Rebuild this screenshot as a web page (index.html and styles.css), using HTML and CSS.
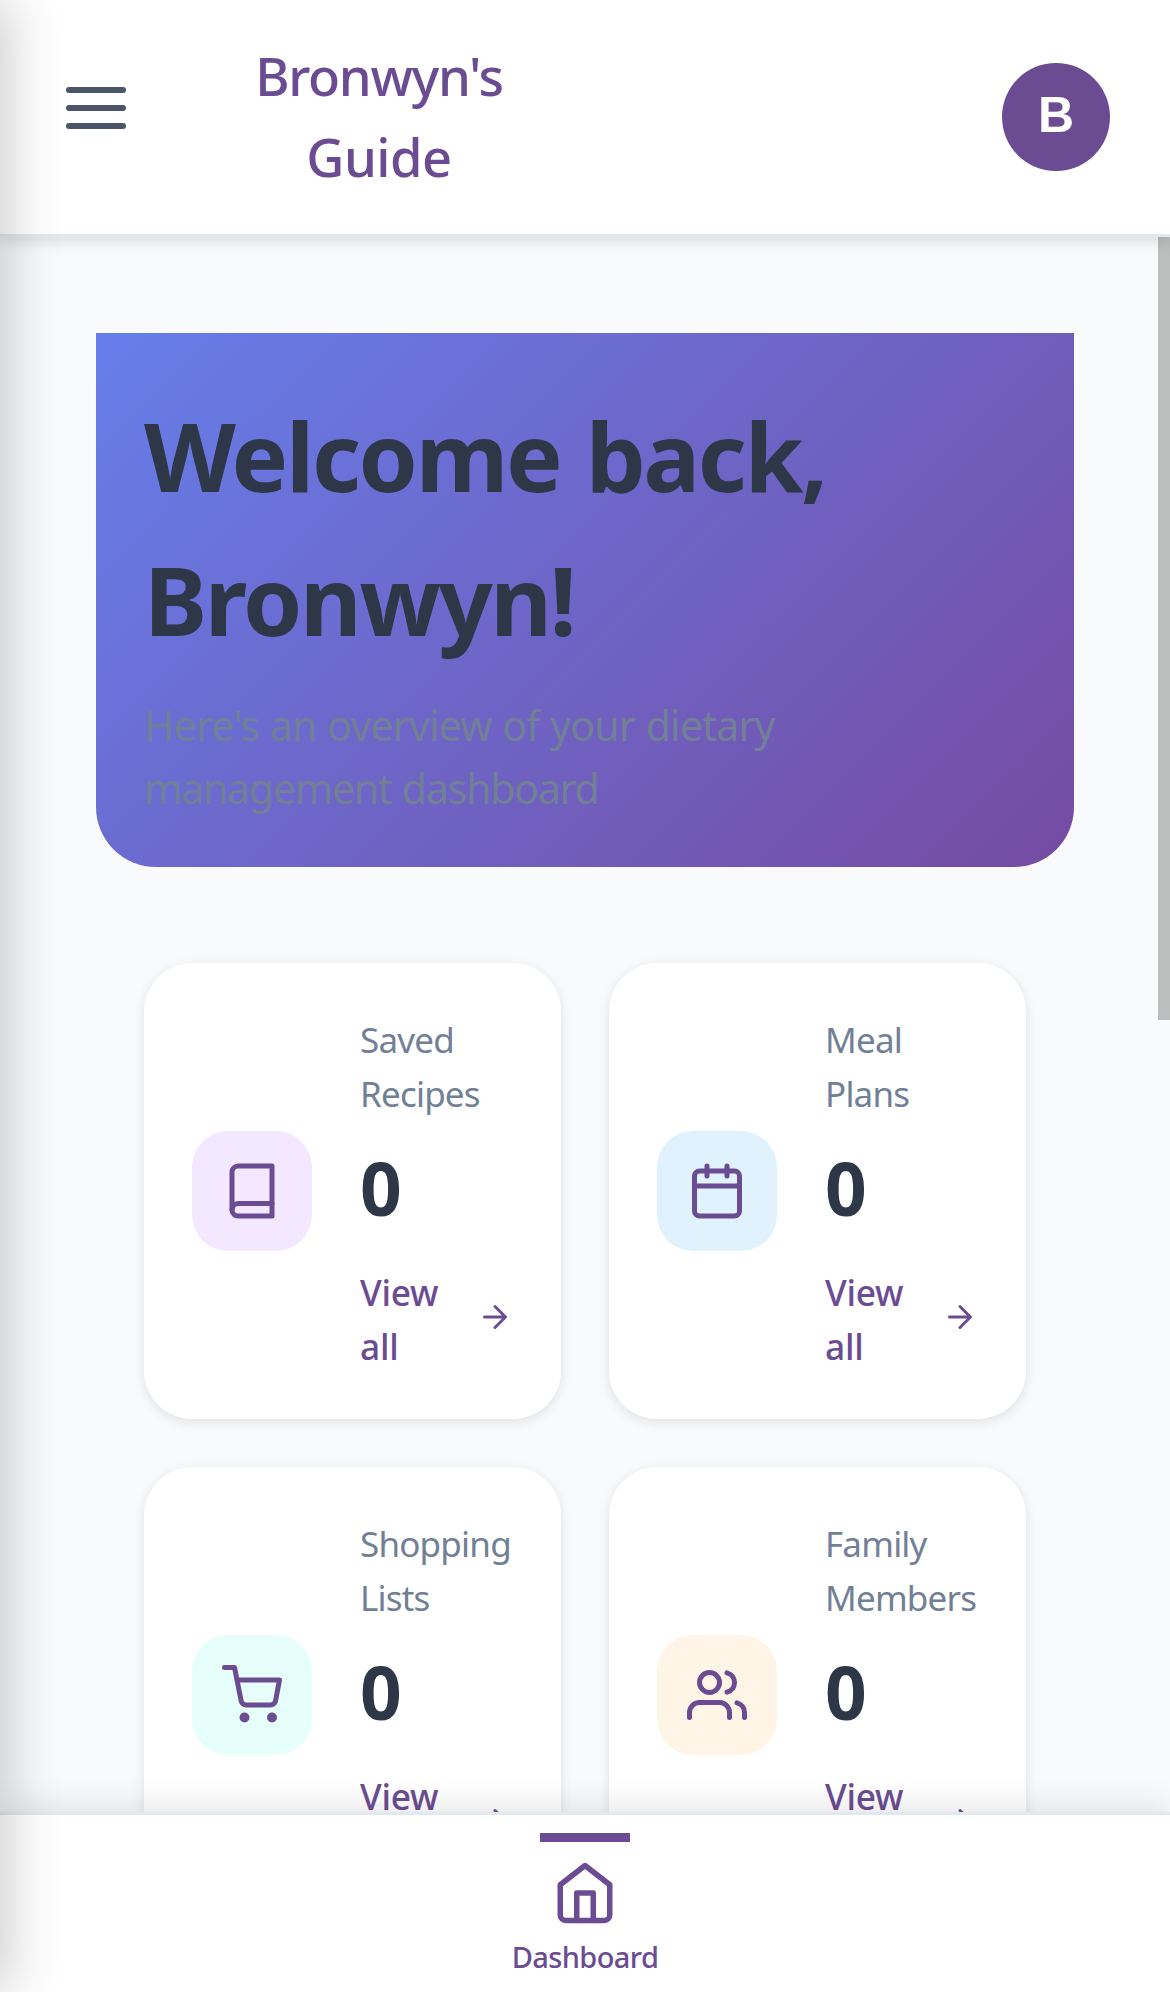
FILE: index.html
```html
<!DOCTYPE html>
<html lang="en">
<head>
<meta charset="utf-8">
<title>Bronwyn's Guide</title>
<link rel="stylesheet" href="styles.css">
</head>
<body>
<div class="app">
  <header class="header">
    <button class="menu" aria-label="Menu"><span class="menu-bar"></span><span class="menu-bar"></span><span class="menu-bar"></span></button>
    <div class="title"><span class="title-name">Bronwyn's</span><br>Guide</div>
    <div class="avatar">B</div>
  </header>

  <main class="main">
    <section class="banner">
      <h1 class="banner-title">Welcome back,<br>Bronwyn!</h1>
      <p class="banner-text">Here's an overview of your dietary<br><span class="banner-text-end">management dashboard</span></p>
    </section>

    <section class="stats">
      <article class="card">
        <div class="card-icon purple">
          <svg class="icon" viewBox="0 0 24 24"><path d="M4 19.5A2.5 2.5 0 0 1 6.5 17H20"/><path d="M6.5 2H20v20H6.5A2.5 2.5 0 0 1 4 19.5v-15A2.5 2.5 0 0 1 6.5 2z"/></svg>
        </div>
        <div class="card-info">
          <div class="label">Saved<br>Recipes</div>
          <div class="number">0</div>
          <a class="link"><span>View<br>all</span><svg class="arrow" viewBox="0 0 24 24"><path d="M5 12h14M12 5l7 7-7 7"/></svg></a>
        </div>
      </article>
      <article class="card">
        <div class="card-icon blue">
          <svg class="icon" viewBox="0 0 24 24"><rect x="3" y="4" width="18" height="18" rx="2"/><path d="M16 2v4M8 2v4M3 10h18"/></svg>
        </div>
        <div class="card-info">
          <div class="label">Meal<br>Plans</div>
          <div class="number">0</div>
          <a class="link"><span>View<br>all</span><svg class="arrow" viewBox="0 0 24 24"><path d="M5 12h14M12 5l7 7-7 7"/></svg></a>
        </div>
      </article>
      <article class="card">
        <div class="card-icon teal">
          <svg class="icon" viewBox="0 0 24 24"><circle cx="9" cy="21" r="1"/><circle cx="20" cy="21" r="1"/><path d="M1 1h4l2.68 13.39a2 2 0 0 0 2 1.61h9.72a2 2 0 0 0 2-1.61L23 6H6"/></svg>
        </div>
        <div class="card-info">
          <div class="label">Shopping<br>Lists</div>
          <div class="number">0</div>
          <a class="link"><span>View<br>all</span><svg class="arrow" viewBox="0 0 24 24"><path d="M5 12h14M12 5l7 7-7 7"/></svg></a>
        </div>
      </article>
      <article class="card">
        <div class="card-icon orange">
          <svg class="icon" viewBox="0 0 24 24"><path d="M17 21v-2a4 4 0 0 0-4-4H5a4 4 0 0 0-4 4v2"/><circle cx="9" cy="7" r="4"/><path d="M23 21v-2a4 4 0 0 0-3-3.87M16 3.13a4 4 0 0 1 0 7.75"/></svg>
        </div>
        <div class="card-info">
          <div class="label">Family<br>Members</div>
          <div class="number">0</div>
          <a class="link"><span>View<br>all</span><svg class="arrow" viewBox="0 0 24 24"><path d="M5 12h14M12 5l7 7-7 7"/></svg></a>
        </div>
      </article>
    </section>
    <div class="scroll-thumb"></div>
  </main>

  <nav class="nav">
    <a class="nav-item">
      <span class="nav-mark"></span>
      <svg class="nav-icon" viewBox="0 0 24 24"><path d="M3 9l9-7 9 7v11a2 2 0 0 1-2 2H5a2 2 0 0 1-2-2z"/><path d="M9 22V12h6v10"/></svg>
      <span class="nav-label">Dashboard</span>
    </a>
  </nav>
  <div class="drawer"></div>
</div>
</body>
</html>
```
FILE: styles.css
```css
* { box-sizing: border-box; margin: 0; padding: 0; }

body {
  font-family: "Noto Sans", "Open Sans", sans-serif;
  background: #f8fafc;
  color: #2d3748;
}

.app {
  position: relative;
  display: flex;
  flex-direction: column;
  width: 1170px;
  height: 1992px;
  overflow: hidden;
}

/* Header */
.header {
  position: relative;
  z-index: 2;
  display: flex;
  align-items: flex-start;
  flex: none;
  height: 237px;
  padding: 0 60px 0 66px;
  background: #fff;
  border-bottom: 3px solid #e2e8f0;
  box-shadow: 0 6px 12px rgba(0, 0, 0, .1);
}

.menu {
  display: flex;
  flex-direction: column;
  gap: 12px;
  width: 60px;
  margin-top: 87px;
  border: 0;
  background: none;
}

.menu-bar {
  height: 6px;
  border-radius: 3px;
  background: #4a5568;
}

.title {
  width: 250px;
  margin: 35px 0 0 128px;
  font-size: 52.5px;
  font-weight: 500;
  line-height: 81px;
  letter-spacing: -.5px;
  text-align: center;
  color: #6b4c93;
}

.title-name { letter-spacing: -1.3px; }

.avatar {
  display: flex;
  align-items: center;
  justify-content: center;
  width: 108px;
  height: 108px;
  margin: 63px 0 0 auto;
  padding-bottom: 5px;
  border-radius: 50%;
  background: #6b4c93;
  color: #fff;
  font: 700 50px "Liberation Sans", Arial, sans-serif;
}

/* Content */
.main {
  position: relative;
  flex: 1;
  min-height: 0;
  overflow: hidden;
  padding: 96px;
}

.banner {
  height: 534px;
  padding: 50px 48px 48px;
  border-radius: 0 0 60px 60px;
  background: linear-gradient(135deg, #667eea 0%, #764ba2 100%);
}

.banner-title {
  font-size: 95px;
  line-height: 144px;
  letter-spacing: -2.35px;
  word-spacing: 3px;
  font-weight: 700;
}

.banner-text {
  margin-top: 23px;
  font-size: 41px;
  line-height: 63px;
  letter-spacing: -.8px;
  word-spacing: .8px;
  color: #718096;
}

.banner-text-end { letter-spacing: -1.2px; }

.stats {
  display: grid;
  grid-template-columns: 1fr 1fr;
  gap: 48px;
  padding: 96px 48px;
}

.card {
  display: flex;
  align-items: center;
  gap: 48px;
  height: 456px;
  padding: 48px;
  border-radius: 48px;
  background: #fff;
  box-shadow: 0 3px 12px rgba(0, 0, 0, .1);
}

.card-icon {
  display: flex;
  align-items: center;
  justify-content: center;
  flex: none;
  width: 120px;
  height: 120px;
  border-radius: 36px;
}

.purple { background: #f3e8ff; }
.blue { background: #e0f2fe; }
.teal { background: #e6fffa; }
.orange { background: #fff5e6; }

.icon, .arrow, .nav-icon {
  display: block;
  flex: none;
  overflow: visible;
  fill: none;
  stroke: #6b4c93;
  stroke-width: 2;
  stroke-linecap: round;
  stroke-linejoin: round;
}

.icon { width: 60px; height: 60px; }

.card-info {
  flex: 1;
  min-width: 0;
  padding-top: 2px;
  margin-bottom: -2px;
}

.label {
  font-size: 35px;
  line-height: 54px;
  letter-spacing: -.8px;
  color: #718096;
}

.number {
  margin: 13px 0 23px;
  font-size: 73px;
  line-height: 108px;
  font-weight: 700;
}

.link {
  display: flex;
  align-items: center;
  justify-content: space-between;
  font-size: 35.3px;
  font-weight: 500;
  line-height: 54px;
  letter-spacing: -.25px;
  color: #6b4c93;
}

.arrow {
  width: 36px;
  height: 36px;
  margin-bottom: 4px;
}

.scroll-thumb {
  position: absolute;
  top: 0;
  right: 0;
  width: 12px;
  height: 783px;
  background: #bcbebd;
}

/* Bottom navigation */
.nav {
  position: relative;
  z-index: 2;
  display: flex;
  justify-content: center;
  flex: none;
  height: 180px;
  padding-top: 18px;
  background: #fff;
  border-top: 3px solid #e2e8f0;
  box-shadow: 0 -6px 30px rgba(0, 0, 0, .1);
}

.nav-item {
  display: flex;
  flex-direction: column;
  align-items: center;
}

.nav-mark {
  width: 90px;
  height: 9px;
  background: #6b4c93;
}

.nav-icon {
  width: 66px;
  height: 66px;
  margin: 18px 0 8px;
}

.nav-label {
  font-size: 29px;
  font-weight: 500;
  line-height: 45px;
  letter-spacing: -.6px;
  color: #6b4c93;
}

/* Closed side drawer; only its shadow reaches the screen */
.drawer {
  position: absolute;
  z-index: 3;
  top: 0;
  left: -840px;
  width: 840px;
  height: 1992px;
  box-shadow: 12px 0 48px rgba(0, 0, 0, .18);
}
```
